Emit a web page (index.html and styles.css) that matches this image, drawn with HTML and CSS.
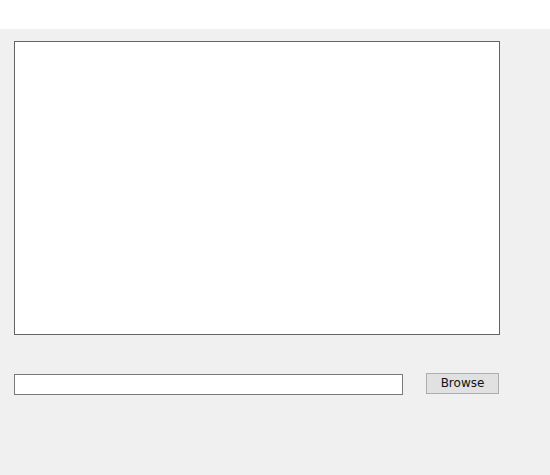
FILE: index.html
```html
<!DOCTYPE html>
<html>
<head>
<meta charset="utf-8">
<link rel="stylesheet" href="styles.css">
</head>
<body>
<div class="top"></div>
<div class="panel">
  <div class="canvas"></div>
  <div class="row">
    <input class="path" type="text">
    <button class="browse">Browse</button>
  </div>
</div>
</body>
</html>
```
FILE: styles.css
```css
html, body { margin: 0; padding: 0; background: #ffffff; }
body { width: 550px; height: 475px; overflow: hidden; font-family: "DejaVu Sans", sans-serif; }
.top { height: 29px; background: #ffffff; }
.panel { height: 446px; background: #f0f0f0; padding: 12px 0 0 14px; box-sizing: border-box; }
.canvas { width: 486px; height: 294px; box-sizing: border-box; border: 1px solid #646464; background: #ffffff; }
.row { display: flex; align-items: flex-start; margin-top: 38px; }
.path { width: 389px; height: 21px; box-sizing: border-box; border: 1px solid #7a7a7a; background: #fff; margin: 1px 0 0 0; padding: 0; outline: none; }
.browse { margin-left: 23px; width: 73px; height: 21px; box-sizing: border-box; border: 1px solid #adadad; background: #e1e1e1; color: #111; font-family: "DejaVu Sans", sans-serif; font-size: 12px; padding: 0; line-height: 17px; border-radius: 0; }
```
